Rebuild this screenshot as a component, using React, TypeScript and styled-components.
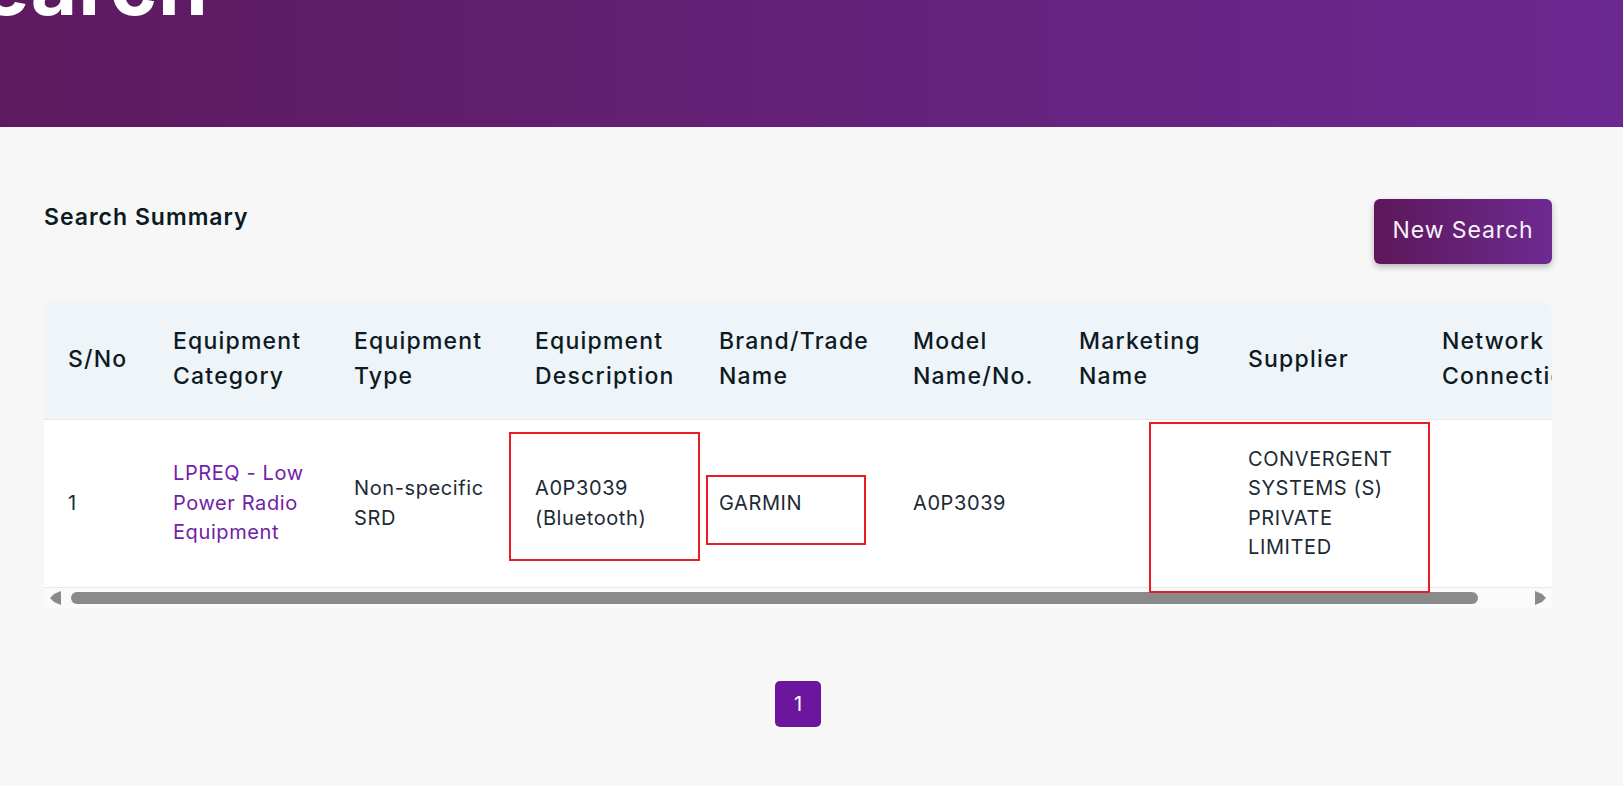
import { createGlobalStyle, styled } from 'styled-components'

const font = `Inter, 'Open Sans', 'Liberation Sans', sans-serif`

const GlobalStyle = createGlobalStyle`
	html,
	body {
		margin: 0;
		padding: 0;
		background: #f7f7f7;
		font-family: ${font};
		overflow: hidden;
	}
`

const columns = [105, 181, 181, 184, 194, 166, 169, 194, 200]
const tableWidth = columns.reduce((sum, width) => sum + width, 0)

const headings = [
	['S/No'],
	['Equipment', 'Category'],
	['Equipment', 'Type'],
	['Equipment', 'Description'],
	['Brand/Trade', 'Name'],
	['Model', 'Name/No.'],
	['Marketing', 'Name'],
	['Supplier'],
	['Network', 'Connection'],
]

const App = () => {
	return (
		<>
			<GlobalStyle />
			<Banner>
				<BannerTitle>Search</BannerTitle>
			</Banner>
			<Main>
				<Toolbar>
					<Heading>Search Summary</Heading>
					<NewSearchButton>New Search</NewSearchButton>
				</Toolbar>
				<Panel>
					<TableClip>
						<Table style={{ width: tableWidth }}>
							<colgroup>
								{columns.map((width, i) => (
									<col key={i} style={{ width }} />
								))}
							</colgroup>
							<thead>
								<tr>
									{headings.map((lines, i) => (
										<HeadCell key={i}>
											{lines.map(line => (
												<Line key={line}>{line}</Line>
											))}
										</HeadCell>
									))}
								</tr>
							</thead>
							<tbody>
								<tr>
									<Cell>1</Cell>
									<Cell>
										<CategoryLink>
											<Line>LPREQ - Low</Line>
											<Line>Power Radio</Line>
											<Line>Equipment</Line>
										</CategoryLink>
									</Cell>
									<Cell>
										<Line>Non-specific</Line>
										<Line>SRD</Line>
									</Cell>
									<Cell>
										<Line>A0P3039</Line>
										<Line>(Bluetooth)</Line>
									</Cell>
									<Cell>GARMIN</Cell>
									<Cell>A0P3039</Cell>
									<Cell />
									<Cell>
										<Line>CONVERGENT</Line>
										<Line>SYSTEMS (S)</Line>
										<Line>PRIVATE</Line>
										<Line>LIMITED</Line>
									</Cell>
									<Cell />
								</tr>
							</tbody>
						</Table>
					</TableClip>
					<ScrollBar>
						<ArrowIcon viewBox='0 0 11 14'>
							<polygon points='11,0 11,14 4,11 0,7 4,3' />
						</ArrowIcon>
						<ScrollThumb />
						<ArrowIcon viewBox='0 0 11 14'>
							<polygon points='0,0 0,14 7,11 11,7 7,3' />
						</ArrowIcon>
					</ScrollBar>
					<Highlight $left={465} $top={132} $width={191} $height={129} />
					<Highlight $left={662} $top={175} $width={160} $height={70} />
					<Highlight $left={1105} $top={122} $width={281} $height={171} />
				</Panel>
				<Pagination>
					<PageButton>1</PageButton>
				</Pagination>
			</Main>
		</>
	)
}

export default App

const Banner = styled.header`
	height: 127px;
	overflow: hidden;
	background: linear-gradient(90deg, #5d1a5e 0%, #6c2891 100%);
`

const BannerTitle = styled.h1`
	margin: -64px 0 0 -72px;
	color: #fff;
	font-family: ${font};
	font-size: 80px;
	font-weight: 700;
	line-height: 100px;
	letter-spacing: 1px;
`

const Main = styled.main`
	padding: 72px 71px 0 44px;
`

const Toolbar = styled.div`
	display: flex;
	justify-content: space-between;
	align-items: flex-start;
	margin-bottom: 36px;
`

const Heading = styled.h2`
	margin: 3px 0 0;
	color: #0c1a24;
	font-size: 23px;
	font-weight: 600;
	line-height: 30px;
	letter-spacing: 1px;
`

const NewSearchButton = styled.button`
	width: 178px;
	height: 65px;
	padding: 0 0 3px;
	border: none;
	border-radius: 6px;
	background: linear-gradient(90deg, #5d1759 0%, #6e2a92 100%);
	box-shadow: 0 3px 6px rgba(0, 0, 0, 0.25);
	color: #f7f2f8;
	font-family: ${font};
	font-size: 23px;
	font-weight: 400;
	letter-spacing: 0.9px;
`

const Panel = styled.section`
	position: relative;
	background: #fff;
	border-radius: 12px 12px 0 0;
`

const TableClip = styled.div`
	overflow: hidden;
	border-radius: 12px 12px 0 0;
`

const Table = styled.table`
	table-layout: fixed;
	border-collapse: collapse;
`

const HeadCell = styled.th`
	height: 119px;
	padding: 0 0 0 24px;
	box-sizing: border-box;
	background: #eff4f8;
	border-bottom: 1px solid #e6eaee;
	color: #0c1a24;
	font-size: 23px;
	font-weight: 500;
	line-height: 35px;
	letter-spacing: 1.2px;
	text-align: left;
	white-space: nowrap;
`

const Cell = styled.td`
	height: 168px;
	padding: 1px 0 0 24px;
	box-sizing: border-box;
	border-bottom: 1px solid #e8e8e8;
	color: #1c2a36;
	font-size: 20px;
	font-weight: 400;
	line-height: 29.4px;
	letter-spacing: 0.6px;
	vertical-align: middle;
	white-space: nowrap;
`

const Line = styled.div``

const CategoryLink = styled.a`
	display: block;
	color: #6f22a8;
`

const ScrollBar = styled.div`
	display: flex;
	align-items: center;
	justify-content: space-between;
	height: 21px;
	padding: 0 6px;
	background: #fafafa;
`

const ArrowIcon = styled.svg`
	width: 11px;
	height: 14px;
	flex: none;
	fill: #8a8a8a;
`

const ScrollThumb = styled.div`
	width: 1407px;
	height: 12px;
	margin: 0 auto 0 10px;
	border-radius: 6px;
	background: #8a8a8a;
`

const Highlight = styled.div<{ $left: number; $top: number; $width: number; $height: number }>`
	position: absolute;
	left: ${p => p.$left}px;
	top: ${p => p.$top}px;
	width: ${p => p.$width}px;
	height: ${p => p.$height}px;
	box-sizing: border-box;
	border: 2px solid #ec1c24;
`

const Pagination = styled.nav`
	display: flex;
	justify-content: center;
	margin-top: 72px;
`

const PageButton = styled.button`
	width: 46px;
	height: 46px;
	padding: 0;
	border: none;
	border-radius: 5px;
	background: #6c169e;
	color: #fff;
	font-family: ${font};
	font-size: 20px;
`
